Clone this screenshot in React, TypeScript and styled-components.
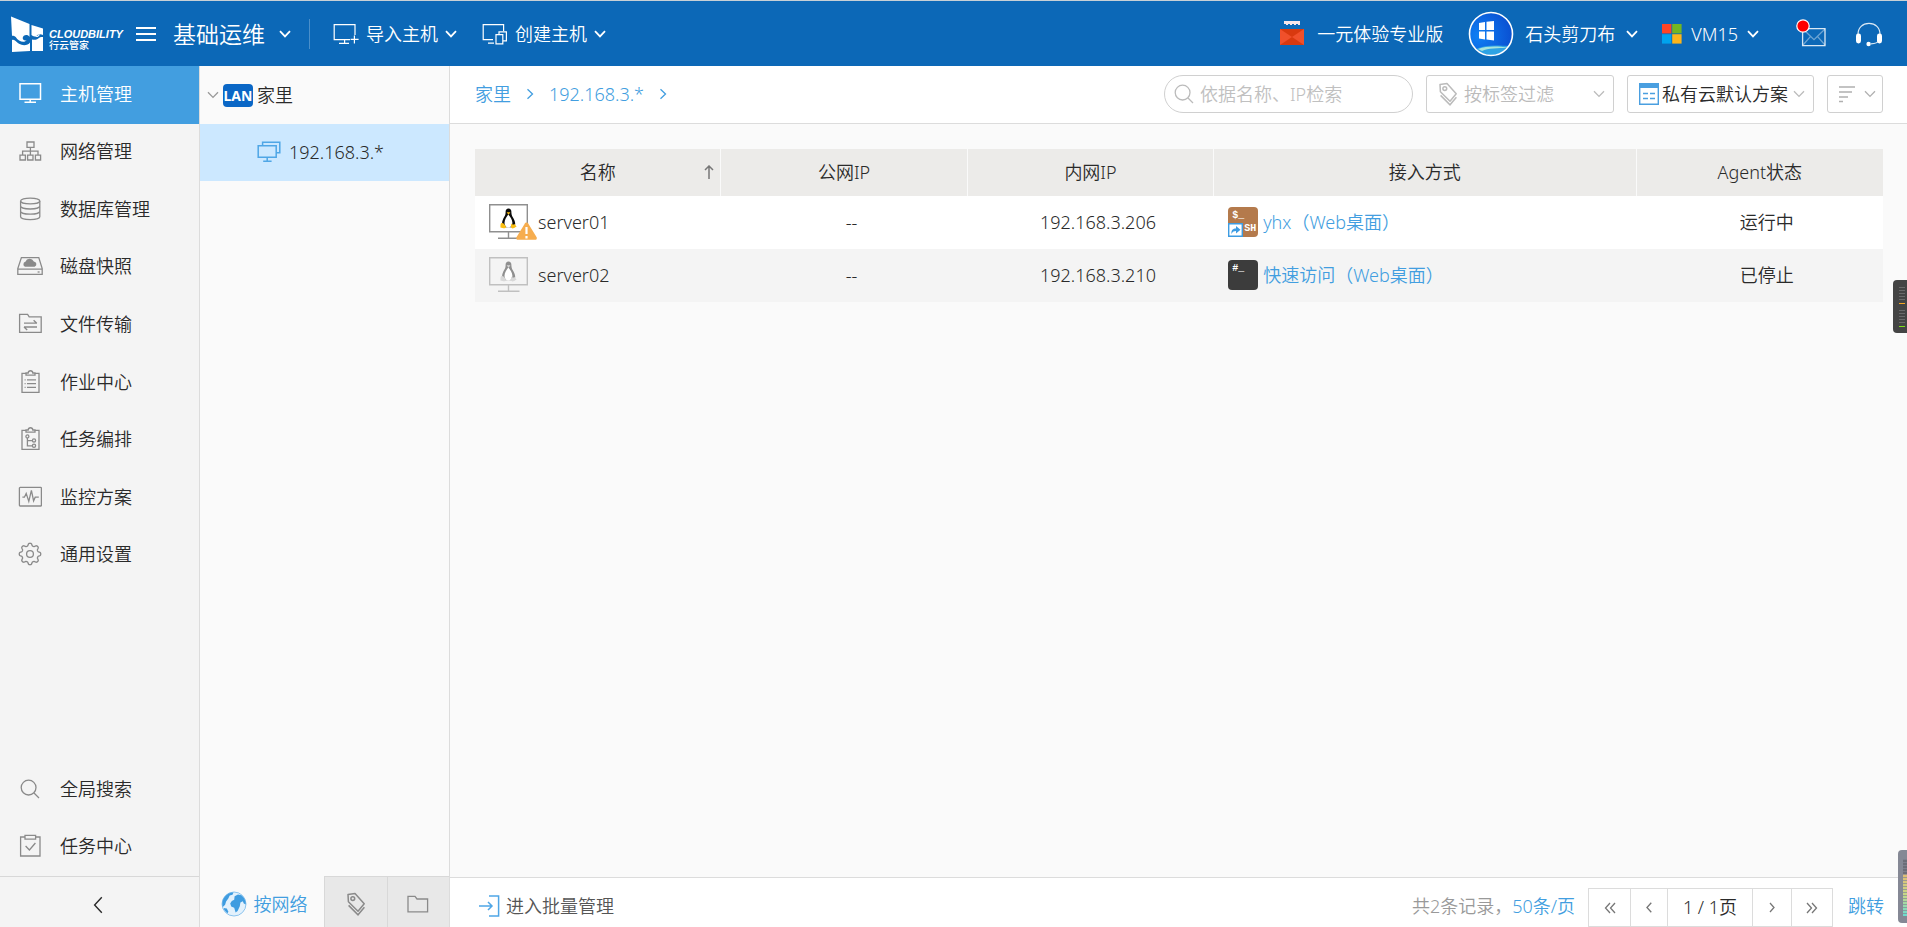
import React from "react";
import styled, { createGlobalStyle } from "styled-components";

const Global = createGlobalStyle`
  * { box-sizing: border-box; }
  body {
    margin: 0;
    font-family: "Noto Sans", "Noto Sans CJK SC", sans-serif;
    font-size: 18px;
    font-weight: 350;
    line-height: 24px;
    color: #2a2a2a;
    background: #fafafa;
  }
  button, input, select {
    font: inherit;
    color: inherit;
    margin: 0;
    padding: 0;
    border: 0;
    background: none;
  }
  a { color: #429ee0; text-decoration: none; }
  svg { display: block; flex: none; }
`;

/* ---------- icons ---------- */

type IconProps = { w?: number; h?: number; box?: string; sw?: number; children: React.ReactNode };

const Icon = ({ w = 24, h = 24, box, sw = 1.3, children }: IconProps) => (
  <svg width={w} height={h} viewBox={box ?? `0 0 ${w} ${h}`} fill="none" stroke="currentColor" strokeWidth={sw} aria-hidden="true">
    {children}
  </svg>
);

const ChevronDown = ({ sw = 1.8 }: { sw?: number }) => (
  <Icon w={12} h={8} sw={sw}><path d="M1 1.2 6 6.4 11 1.2" /></Icon>
);

const ChevronLeft = ({ w = 10, h = 18, sw = 1.4 }) => (
  <Icon w={w} h={h} box="0 0 10 18" sw={sw}><path d="M8.8 1.2 1.6 9l7.2 7.8" /></Icon>
);

const MonitorIcon = () => (
  <Icon sw={1.5}><path d="M2 1.8h20.5v15.4H2zM12.2 17v3.2M6.5 20.3h11.5" /></Icon>
);

const NetworkIcon = () => (
  <Icon><path d="M9 3h7v5.4H9zM2 16.2h5.4v4.8H2zM9.6 16.2H15v4.8H9.6zM17.4 16.2h5.2v4.8h-5.2zM12.4 8.4v7.8M4.6 16.2v-4h15.4v4" /></Icon>
);

const DatabaseIcon = () => (
  <Icon><ellipse cx="12.2" cy="4" rx="9.6" ry="2.9" /><path d="M2.6 4v15.8c0 1.5 4.3 2.8 9.6 2.8s9.6-1.3 9.6-2.8V4M2.6 9c0 1.7 4.3 3 9.6 3s9.6-1.3 9.6-3M2.6 14.2c0 1.7 4.3 3 9.6 3s9.6-1.3 9.6-3" /></Icon>
);

const DiskIcon = () => (
  <Icon w={26}>
    <path d="M4.4 3.6h17.4l3.4 11v5.8H.8v-5.8zM1 15.2h24" />
    <path d="M8.2 12.8a2.6 2.6 0 0 1 .2-5 4.6 4.6 0 0 1 8.4-.4 2.8 2.8 0 0 1 .8 5.4z" fill="currentColor" stroke="none" />
    <path d="M20.6 18h2" />
  </Icon>
);

const TransferIcon = () => (
  <Icon><path d="M1.6 2.4h8l1.6 2.4h12v15.6H1.6zM6 11.2h13M15.6 8.2l3.2 3M19 15H6M9.2 18 6 15" /></Icon>
);

const JobIcon = () => (
  <Icon><path d="M8 3.4H4v19h17v-19h-4M8 5.2V3h2.2c.2-3 4.400-3 4.600 0H17v2.200zM9 9.800h9M9 13.600h9M9 17.400h9M6.600 9.800h1M6.600 13.600h1M6.600 17.400h1" /></Icon>
);

const FlowIcon = () => (
  <Icon>
    <path d="M8 3.4H4v19h17v-19h-4M8 5.2V3h2.2c.2-3 4.400-3 4.600 0H17v2.200zM9.400 11v7.800h5M9.400 13.600h5" />
    <circle cx="9.4" cy="9.4" r="1.5" /><circle cx="16" cy="13.4" r="1.6" /><circle cx="16" cy="18.8" r="1.6" />
  </Icon>
);

const MonitorPlanIcon = () => (
  <Icon><rect x="1.4" y="2.4" width="22" height="18.6" rx=".8" /><path d="M4.4 12.200h2l1.800-3.800 2.600 8 2.600-11 2.200 10.400 1.600-3.600h3.600" /></Icon>
);

const gearOutline = Array.from({ length: 160 }, (_, i) => {
  const angle = (i / 160) * Math.PI * 2;
  const radius = 9.5 + 1.3 * Math.tanh(1.8 * Math.cos(8 * angle));
  return `${(12 + radius * Math.cos(angle)).toFixed(2)},${(12 + radius * Math.sin(angle)).toFixed(2)}`;
}).join(" ");

const GearIcon = () => (
  <Icon><circle cx="12" cy="12" r="3.4" /><polygon points={gearOutline} strokeLinejoin="round" /></Icon>
);

const SearchIcon = ({ sw = 1.3 }) => (
  <Icon w={20} h={20} sw={sw}><circle cx="8.6" cy="8.6" r="7.4" /><path d="m14 14 5 5" /></Icon>
);

const TaskIcon = () => (
  <Icon><path d="M7 3H2.6v19H22V3h-4.4M7 1.4h10.6v3.8H7zM7.6 12l3.800 4 6-7" /></Icon>
);

const TagIcon = () => (
  <Icon w={20} h={24} sw={1.5}>
    <path d="M2 2.4 9 1.6 18.2 11.8 12 19.2 2.4 9.8z" strokeLinejoin="round" />
    <path d="M2.6 13.4 12 22.8 18.4 15.2" />
    <circle cx="6.8" cy="6.6" r="1.9" />
  </Icon>
);

const FolderIcon = () => (
  <Icon w={22} h={18}><path d="M1 1.4h7l2 2.6h10.6v12.8H1z" /></Icon>
);

const EnterIcon = () => (
  <Icon w={22} h={22} sw={1.5}><path d="M11 1h9.600v20H11M1 11h13M10 7l4 4-4 4" /></Icon>
);

const GlobeIcon = () => (
  <svg width="26" height="28" viewBox="0 0 26 26" aria-hidden="true">
    <circle cx="13" cy="13" r="12" fill="#e3f1fc" stroke="#8cc4ee" />
    <path d="M4 5.5C6.5 2 11 1 12.5 1.6l-1 2.200-2.800.8-1.400 3-2.200 2.800-1 3.400L1.800 16C.6 12 1.800 8 4 5.5zM2.600 17l3.200.6 1.600 3.200-1 1.400c-2-1.400-3.300-3.200-3.800-5.200z" fill="#3f9ce0" />
    <path d="m13.6 5.2 3.4-1.6 3.4.6c3 2.600 4.600 5.800 4.400 9.200l-2-.8-1-2.400-2.400 1.400-.6 3.600-2.200 4.800-2 1.400-1.400-4.600-3-1.200-1-3 1.600-2.600 2.400-1.200z" fill="#3f9ce0" />
  </svg>
);

const ScreensIcon = () => (
  <Icon w={24} h={22} sw={1.5}><path d="M5.6 4.6V1.2h17.2v10.6h-3M1.2 4.8h18v11.4h-18zM10.2 16.2v3.4M6.2 20.2h8.400" /></Icon>
);

const ImportIcon = () => (
  <Icon w={26} h={22} sw={1.2}><path d="M22 12V1.6H1.2v15H17M11.6 16.6v3.8M6 20.4h10M21.4 12.4v8M17.6 16.4h8" /></Icon>
);

const CreateIcon = () => (
  <Icon w={26} h={22} sw={1.2}><path d="M21.6 8V1.6H1.2v15H11M6 20.2h6M14 11.6h6.8v9.2H14zM17 11.6V8.8h7.4v9h-3.6" /></Icon>
);

const RedPacketIcon = () => (
  <svg width="24" height="26" viewBox="0 0 24 26" aria-hidden="true">
    <path d="M4 0h16v4H4z" fill="#f7e6ea" />
    <path d="M4 3h2v2H4zM8 3h2v2H8zM12 3h2v2h-2zM16 3h2v2h-2z" fill="#0c68b7" />
    <path d="M0 8h24v16H0z" fill="#f0502b" />
    <path d="M0 8h24L12 16zM0 24l12-8 12 8z" fill="#d8390f" />
  </svg>
);

const AvatarIcon = () => (
  <svg width="46" height="46" viewBox="0 0 46 46" role="img" aria-label="石头剪刀布">
    <defs>
      <radialGradient id="sky" cx="20%" cy="55%" r="80%">
        <stop offset="0" stopColor="#0f80f4" /><stop offset="1" stopColor="#0a50d2" />
      </radialGradient>
      <clipPath id="disc"><circle cx="23" cy="23" r="21" /></clipPath>
    </defs>
    <circle cx="23" cy="23" r="21" fill="url(#sky)" />
    <g clipPath="url(#disc)">
      <path d="M8 38c8-4 18-4 34-3l-6 9H14z" fill="#2ea3e4" />
      <path d="M10 38c9-3 20-3 30-1-10 0-20 0-26 3z" fill="#a6e4dc" />
    </g>
    <path d="m11 12 6-1v8h-6zM18.5 10.8 26 10v9h-7.5zM11 20.500h6v8l-6-1zM18.500 20.500H26v9l-7.500-1z" fill="#fff" />
    <circle cx="23" cy="23" r="21.5" fill="none" stroke="#fff" strokeWidth="1.6" />
  </svg>
);

const MicrosoftIcon = () => (
  <svg width="20" height="20" viewBox="0 0 20 20" aria-hidden="true">
    <path d="M0 0h9.400v9.400H0z" fill="#ff4425" /><path d="M10.200 0h9.400v9.400h-9.400z" fill="#72b622" />
    <path d="M0 10.200h9.400v9.400H0z" fill="#00a3ee" /><path d="M10.200 10.200h9.400v9.400h-9.400z" fill="#fcb51a" />
  </svg>
);

const MailIcon = () => (
  <Icon w={32} h={30} sw={1.3}>
    <g strokeOpacity=".85"><path d="M7.6 9.6h22.4v17H7.6z" /><path d="m8 10 11 10.6L30 10M8 26l7.6-8.6M30 26l-7.6-8.6" strokeOpacity=".4" /></g>
    <circle cx="8" cy="7" r="6.2" fill="#f00" stroke="#fff" strokeWidth="1.2" />
  </Icon>
);

const HeadsetIcon = () => (
  <Icon w={28} h={26} sw={1.2}>
    <path d="M3 13.5C3 6.5 7.600 2.400 14 2.400s11 4.100 11 11.100M24.600 19c-1.600 2.600-4 3.800-8.600 3.800" strokeOpacity=".85" />
    <rect x="1" y="12.4" width="5" height="10" rx="2.4" fill="currentColor" stroke="none" />
    <rect x="22" y="12.4" width="5" height="10" rx="2.4" fill="currentColor" stroke="none" />
    <circle cx="13.6" cy="23" r="2.2" fill="currentColor" stroke="none" />
  </Icon>
);

const LogoMark = () => (
  <svg width="33" height="36" viewBox="0 0 33 36" aria-hidden="true">
    <path d="M0 .5 18.5 8v13c-1.500-3-6.500-2.500-6.800 1 0 2.200 2.500 3.200 4 2-2 3.500-8.500 1.500-11-3-1-1-3-1.500-3.700-1.200z" fill="#fff" />
    <path d="M20.5 9 32 12.5V19c-2-1-5-1-6 .5-2 1.500-4 1-5.500-.5z" fill="#fff" />
    <path d="M1 24c3-1 4 2 7 3.800 4 2.200 9 1.600 11-1.300V35L1 36zM21 23.500c3 1 6-.5 7-1.500 1.500-1.500 3-1 4-1v14H21z" fill="#fff" />
    <path d="M24 19c1 2.400 4.400 1.400 4-.8" fill="none" stroke="#fff" strokeWidth="1.2" />
  </svg>
);

const SchemeIcon = () => (
  <svg width="20" height="22" viewBox="0 0 20 22" aria-hidden="true">
    <path d="M.7.700h18.600v20.600H.7z" fill="#fff" stroke="#4a9fe0" strokeWidth="1.4" />
    <path d="M0 0h20v5H0z" fill="#4a9fe0" />
    <path d="M4 10.500h5M11 10.500h5M4 15.500h5M11 15.500h5" stroke="#4a9fe0" strokeWidth="1.3" />
  </svg>
);

const SortIcon = () => (
  <Icon w={17} h={18} sw={1.5}><path d="M0 2h16M0 7h13M0 12h9M0 16.500h4" /></Icon>
);

const HostIcon = ({ off, warn }: { off?: boolean; warn?: boolean }) => {
  const frame = off ? "#c0c0c0" : "#8f8f8f";
  const dark = off ? "#8f8f8f" : "#0b0b0b";
  const foot = off ? "#d8d8d8" : "#fcbf12";
  return (
    <svg width="48" height="38" viewBox="0 0 48 38" aria-hidden="true">
      <path d="M.7 1.7h37.600v27H.7zM19.500 29v6M9 35.300h21.500" fill="none" stroke={frame} strokeWidth="1.4" />
      <path d="M19.500 5.600c-2 0-3 1.600-2.900 3.600.1 3-1 4-2.400 6.600-1.400 2.800-1.600 6-.4 8.400h11.600c1.400-2.600.8-5.600-.6-8.200-1.400-2.400-2.500-3.800-2.400-6.800.1-2-.9-3.600-2.900-3.600z" fill={dark} />
      <path d="M19.300 11.400c-1.600 2.400-4 5.400-3.800 8.800.2 2.800 1.800 4.400 3.800 4.400 2.200 0 4-1.800 4.100-4.600.1-3.400-2.300-6.200-4.100-8.600z" fill="#fff" />
      <path d="M17.600 9.200h3.800l-1.800 2.600z" fill={foot} />
      <path d="M12 20.200c2-1 3.600 1 4.900 3.200.4 1.600-1 2-2.500 1.800l-3-.8c.2-1.600-.2-3 .6-4.200zM22.200 20.600c1 1.400 2.600 1 3.300.4l2.100 2.400-2.600 1.600c-1.400 1-3 .2-3-1.400z" fill={foot} />
      {warn && (
        <>
          <path d="M37.500 19.500c1 0 1.600.6 2 1.400l8 13.200c.8 1.400 0 2.700-1.400 2.700H29c-1.400 0-2.200-1.300-1.400-2.700l8-13.200c.3-.8.9-1.400 1.900-1.400z" fill="#f6ad4f" />
          <path d="M37.500 24v7M37.500 33v2.600" stroke="#fff" strokeWidth="2.2" />
        </>
      )}
    </svg>
  );
};

const ShareArrow = () => (
  <svg width="15" height="14" viewBox="0 0 15 14" aria-hidden="true">
    <path d="M.7.700h13.600v12.600H.7z" fill="#fff" stroke="#3d9ce2" strokeWidth="1.4" />
    <path d="M3.5 11c-.5-4 1.500-5.600 4.500-5.600V3l4.500 3.700L8 10.400V8C6 8 4.500 8.600 3.500 11z" fill="#3d9ce2" />
  </svg>
);

/* ---------- page frame ---------- */

const Page = styled.div`
  display: flex;
  flex-direction: column;
  height: 100vh;
  border-top: 1px solid #c8d0d6;
`;

const Header = styled.header`
  display: flex;
  flex: none;
  align-items: center;
  justify-content: space-between;
  height: 65px;
  padding: 0 24px 0 11px;
  background: #0c68b7;
  color: #fff;
`;

const HeaderGroup = styled.div`
  display: flex;
  align-items: center;
`;

const Logo = styled.a`
  display: flex;
  gap: 5px;
  width: 117px;
  color: #fff;
  white-space: nowrap;
`;

const LogoText = styled.span`
  display: flex;
  flex-direction: column;
  padding-top: 12px;
  font-family: "Liberation Sans", "Noto Sans CJK SC", sans-serif;
  font-weight: 700;
  line-height: 12px;
`;

const LogoName = styled.i`
  font-size: 11px;
`;

const LogoSub = styled.span`
  font-size: 10px;
  font-weight: 500;
`;

const Burger = styled.button`
  display: flex;
  flex-direction: column;
  gap: 4px;
  width: 20px;
  margin-left: 8px;
  &::before, &::after, span { content: ""; height: 2px; width: 20px; background: #fff; }
`;

const HeaderButton = styled.button<{ $gap?: number; $ml: number; $large?: boolean }>`
  display: flex;
  align-items: center;
  gap: ${(p) => p.$gap ?? 7}px;
  margin-left: ${(p) => p.$ml}px;
  font-size: ${(p) => (p.$large ? 23 : 18)}px;
  white-space: nowrap;
  cursor: pointer;
`;

const Divider = styled.span`
  width: 1px;
  height: 30px;
  margin-left: 18px;
  background: #4a8fca;
`;

const Body = styled.div`
  display: flex;
  flex: 1;
  min-height: 0;
`;

/* ---------- side navigation ---------- */

const Sidebar = styled.nav`
  display: flex;
  flex: none;
  flex-direction: column;
  justify-content: space-between;
  width: 200px;
  border-right: 1px solid #dcdcdc;
  background: #f4f4f4;
`;

const NavList = styled.div<{ $height: number }>`
  display: grid;
  grid-auto-rows: 1fr;
  height: ${(p) => p.$height}px;
`;

const NavItem = styled.a<{ $active?: boolean }>`
  display: flex;
  align-items: center;
  gap: 17px;
  padding: 0 0 2px 17px;
  color: ${(p) => (p.$active ? "#fff" : "#2a2a2a")};
  background: ${(p) => (p.$active ? "#429ee0" : "transparent")};
`;

const NavIcon = styled.span<{ $active?: boolean }>`
  display: flex;
  justify-content: center;
  width: 26px;
  color: ${(p) => (p.$active ? "#fff" : "#8a8a8a")};
`;

const Collapse = styled.button`
  display: flex;
  align-items: center;
  justify-content: center;
  width: 100%;
  height: 51px;
  padding: 6px 3px 0 0;
  border-top: 1px solid #d8d8d8;
`;

/* ---------- network tree ---------- */

const Tree = styled.aside`
  display: flex;
  flex: none;
  flex-direction: column;
  width: 250px;
  border-right: 1px solid #dcdcdc;
`;

const TreeRoot = styled.button`
  display: flex;
  align-items: center;
  gap: 4px;
  height: 58px;
  padding: 0 0 0 7px;
  svg { color: #999; }
`;

const LanBadge = styled.span`
  width: 30px;
  height: 23px;
  border-radius: 4px;
  background: #0a67c6;
  color: #fff;
  font-size: 14px;
  font-weight: 700;
  line-height: 23px;
  text-align: center;
`;

const TreeNode = styled.a`
  display: flex;
  align-items: center;
  gap: 8px;
  height: 57px;
  padding: 0 0 2px 57px;
  background: #cce8ff;
  color: #2a2a2a;
  svg { color: #4fa6e6; }
`;

const TreeTabs = styled.div`
  display: grid;
  grid-template-columns: 124px 1fr 1fr;
  height: 51px;
  margin-top: auto;
`;

const TreeTab = styled.button<{ $active?: boolean }>`
  display: flex;
  align-items: center;
  justify-content: center;
  gap: 7px;
  padding: 4px 0 0 ${(p) => (p.$active ? 4 : 0)}px;
  color: ${(p) => (p.$active ? "#429ee0" : "#8a8a8a")};
  background: ${(p) => (p.$active ? "transparent" : "#e8e8e8")};
  border: solid #d8d8d8;
  border-width: ${(p) => (p.$active ? "0" : "1px 0 0 1px")};
`;

/* ---------- main panel ---------- */

const Main = styled.main`
  display: flex;
  flex: 1;
  flex-direction: column;
  min-width: 0;
`;

const Toolbar = styled.div`
  display: flex;
  align-items: center;
  justify-content: space-between;
  height: 58px;
  padding: 0 24px 1px 25px;
  border-bottom: 1px solid #dcdcdc;
  background: #fff;
`;

const Crumbs = styled.nav`
  display: flex;
  align-items: center;
  gap: 15px;
  svg { color: #429ee0; }
`;

const CrumbArrow = () => (
  <Icon w={8} h={12} sw={1.3}><path d="m1.5 1.2 5 4.8-5 4.800" /></Icon>
);

const Filters = styled.div`
  display: flex;
  gap: 13px;
`;

const Field = styled.label<{ $width: number; $round?: boolean; $muted?: boolean }>`
  display: flex;
  align-items: center;
  gap: ${(p) => (p.$muted ? 6 : 3)}px;
  width: ${(p) => p.$width}px;
  height: 38px;
  padding: 0 8px 0 ${(p) => (p.$round ? 9 : 11)}px;
  border: 1px solid #d0d0d0;
  border-radius: ${(p) => (p.$round ? 19 : 3)}px;
  background: #fff;
  color: ${(p) => (p.$muted ? "#bbb" : "#2a2a2a")};
  & > svg:last-child { color: #bbb; margin-left: auto; }
`;

const FieldInput = styled.input`
  flex: 1;
  min-width: 0;
  outline: none;
  &::placeholder { color: #c0c0c0; opacity: 1; }
`;

const FieldSelect = styled.select`
  flex: 1;
  min-width: 0;
  appearance: none;
  outline: none;
`;

const SortButton = styled.button`
  display: flex;
  align-items: center;
  justify-content: space-between;
  width: 56px;
  height: 38px;
  padding: 0 6px 0 11px;
  border: 1px solid #d0d0d0;
  border-radius: 3px;
  color: #b0b0b0;
`;

const Content = styled.section`
  flex: 1;
  padding: 25px 24px 0 25px;
`;

const HostTable = styled.table`
  width: 100%;
  table-layout: fixed;
  border-collapse: separate;
  border-spacing: 0;
`;

const HeadCell = styled.th<{ $wide?: boolean }>`
  width: ${(p) => (p.$wide ? 30 : 17.5)}%;
  height: 47px;
  padding: 0 0 2px;
  background: #ecebe9;
  border-right: 1px solid #fafafa;
  font-weight: inherit;
  &:last-child { border-right: 0; }
`;

const SortHead = styled.div`
  display: grid;
  grid-template-columns: 30px 1fr 30px;
  align-items: center;
  svg { color: #777; margin-left: 14px; }
`;

const Row = styled.tr`
  background: #fff;
  &:nth-child(even) { background: #f4f4f4; }
`;

const Cell = styled.td<{ $left?: boolean }>`
  height: 53px;
  padding: 0 0 2px 14px;
  text-align: ${(p) => (p.$left ? "left" : "center")};
`;

const Inline = styled.div<{ $gap: number }>`
  display: flex;
  align-items: center;
  gap: ${(p) => p.$gap}px;
`;

const Terminal = styled.span<{ $color: string }>`
  position: relative;
  width: 30px;
  height: 30px;
  padding: 3px 4px;
  border-radius: 4px;
  background: ${(p) => p.$color};
  color: #fff;
  font: 700 10px/12px "Liberation Mono", monospace;
`;

const Shortcut = styled.span`
  position: absolute;
  left: 0;
  bottom: 0;
`;

const Protocol = styled.span`
  position: absolute;
  right: 2px;
  bottom: 2px;
`;

const Footer = styled.footer`
  display: flex;
  align-items: center;
  justify-content: space-between;
  height: 50px;
  padding: 6px 23px 0 28px;
  border-top: 1px solid #dcdcdc;
  background: #fff;
`;

const BatchButton = styled.button`
  display: flex;
  align-items: center;
  gap: 6px;
  color: #555;
  svg { color: #4fa6e6; }
`;

const Pagination = styled.div`
  display: flex;
  align-items: center;
  color: #999;
`;

const Pager = styled.div`
  display: flex;
  margin: 4px 15px 0 13px;
  border: 1px solid #dcdcdc;
`;

const PageButton = styled.button<{ $width: number }>`
  display: flex;
  align-items: center;
  justify-content: center;
  width: ${(p) => p.$width}px;
  height: 37px;
  color: #777;
  & + & { border-left: 1px solid #dcdcdc; }
`;

const PageNumber = styled.span`
  width: 86px;
  border: solid #dcdcdc;
  border-width: 0 1px;
  color: #2a2a2a;
  line-height: 37px;
  text-align: center;
`;

/* ---------- floating level meters ---------- */

const Meter = styled.div<{ $pale?: boolean }>`
  position: fixed;
  right: 0;
  ${(p) => (p.$pale ? "bottom: 4px; width: 9px; height: 73px;" : "top: 280px; width: 14px; height: 53px;")}
  border-radius: 4px 0 0 4px;
  overflow: hidden;
`;

const DarkMeter = () => (
  <Meter>
    <svg width="14" height="53" viewBox="0 0 14 53" aria-hidden="true">
      <path d="M0 0h14v53H0z" fill="#444" />
      <path d="M6 7.5h6M6 10.500h6M6 13.500h6M6 16.500h6M6 19.500h6M6 30.500h6M6 33.500h6M6 36.500h6M6 39.500h6M6 42.500h6" stroke="#6a6a6a" />
      <path d="M6 23.500h6" stroke="#f5a623" /><path d="M6 46.500h6" stroke="#7ee01a" />
    </svg>
  </Meter>
);

const PaleMeter = () => (
  <Meter $pale>
    <svg width="9" height="73" viewBox="0 0 9 73" aria-hidden="true">
      <defs>
        <linearGradient id="level" x1="0" y1="0" x2="0" y2="1">
          <stop offset="0" stopColor="#e0bc74" /><stop offset=".5" stopColor="#c8d888" /><stop offset="1" stopColor="#6cdcd0" />
        </linearGradient>
      </defs>
      <path d="M0 0h9v73H0z" fill="#858895" />
      <path d="M5 9h4v15H5z" fill="#6c6d78" />
      <path d="M5 24h4v42H5z" fill="url(#level)" />
      <path d="M7 9v57" stroke="#858895" strokeWidth="4" strokeDasharray="1 2" strokeOpacity=".7" />
    </svg>
  </Meter>
);

/* ---------- data ---------- */

type NavEntry = { label: string; icon: React.ReactNode; active?: boolean };

const navItems: NavEntry[] = [
  { label: "主机管理", icon: <MonitorIcon />, active: true },
  { label: "网络管理", icon: <NetworkIcon /> },
  { label: "数据库管理", icon: <DatabaseIcon /> },
  { label: "磁盘快照", icon: <DiskIcon /> },
  { label: "文件传输", icon: <TransferIcon /> },
  { label: "作业中心", icon: <JobIcon /> },
  { label: "任务编排", icon: <FlowIcon /> },
  { label: "监控方案", icon: <MonitorPlanIcon /> },
  { label: "通用设置", icon: <GearIcon /> },
];

const navTools: NavEntry[] = [
  { label: "全局搜索", icon: <SearchIcon /> },
  { label: "任务中心", icon: <TaskIcon /> },
];

const hosts = [
  { name: "server01", ip: "192.168.3.206", access: "yhx（Web桌面）", status: "运行中", running: true },
  { name: "server02", ip: "192.168.3.210", access: "快速访问（Web桌面）", status: "已停止", running: false },
];

const NavGroup = ({ items, height }: { items: NavEntry[]; height: number }) => (
  <NavList $height={height}>
    {items.map((it) => (
      <NavItem key={it.label} href="#" $active={it.active}>
        <NavIcon $active={it.active}>{it.icon}</NavIcon>
        {it.label}
      </NavItem>
    ))}
  </NavList>
);

export default function App() {
  return (
    <>
      <Global />
      <Page>
        <Header>
          <HeaderGroup>
            <Logo href="#">
              <LogoMark />
              <LogoText>
                <LogoName>CLOUDBILITY</LogoName>
                <LogoSub>行云管家</LogoSub>
              </LogoText>
            </Logo>
            <Burger aria-label="菜单"><span /></Burger>
            <HeaderButton $ml={17} $gap={14} $large>基础运维<ChevronDown /></HeaderButton>
            <Divider />
            <HeaderButton $ml={23}><ImportIcon />导入主机<ChevronDown /></HeaderButton>
            <HeaderButton $ml={25}><CreateIcon />创建主机<ChevronDown /></HeaderButton>
          </HeaderGroup>
          <HeaderGroup>
            <HeaderButton $ml={0} $gap={13}><RedPacketIcon />一元体验专业版</HeaderButton>
            <HeaderButton $ml={25} $gap={11}><AvatarIcon />石头剪刀布<ChevronDown /></HeaderButton>
            <HeaderButton $ml={24} $gap={9}><MicrosoftIcon />VM15<ChevronDown /></HeaderButton>
            <HeaderButton $ml={36} aria-label="消息"><MailIcon /></HeaderButton>
            <HeaderButton $ml={28} aria-label="客服"><HeadsetIcon /></HeaderButton>
          </HeaderGroup>
        </Header>
        <Body>
          <Sidebar>
            <NavGroup items={navItems} height={518} />
            <div>
              <NavGroup items={navTools} height={115} />
              <Collapse aria-label="收起"><ChevronLeft /></Collapse>
            </div>
          </Sidebar>
          <Tree>
            <TreeRoot><ChevronDown sw={1.3} /><LanBadge>LAN</LanBadge>家里</TreeRoot>
            <TreeNode href="#"><ScreensIcon />192.168.3.*</TreeNode>
            <TreeTabs>
              <TreeTab $active><GlobeIcon />按网络</TreeTab>
              <TreeTab aria-label="按标签"><TagIcon /></TreeTab>
              <TreeTab aria-label="按分组"><FolderIcon /></TreeTab>
            </TreeTabs>
          </Tree>
          <Main>
            <Toolbar>
              <Crumbs>
                <a href="#">家里</a><CrumbArrow />
                <a href="#">192.168.3.*</a><CrumbArrow />
              </Crumbs>
              <Filters>
                <Field $width={249} $round $muted>
                  <SearchIcon />
                  <FieldInput placeholder="依据名称、IP检索" aria-label="依据名称、IP检索" />
                </Field>
                <Field $width={188} $muted>
                  <TagIcon />
                  <FieldSelect aria-label="按标签过滤"><option>按标签过滤</option></FieldSelect>
                  <ChevronDown sw={1.3} />
                </Field>
                <Field $width={187}>
                  <SchemeIcon />
                  <FieldSelect aria-label="显示方案"><option>私有云默认方案</option></FieldSelect>
                  <ChevronDown sw={1.3} />
                </Field>
                <SortButton aria-label="排序"><SortIcon /><ChevronDown sw={1.3} /></SortButton>
              </Filters>
            </Toolbar>
            <Content>
              <HostTable>
                <thead>
                  <tr>
                    <HeadCell>
                      <SortHead>
                        <span />名称
                        <Icon w={10} h={14} sw={1.5}><path d="M5 14V1M1 5l4-4 4 4" /></Icon>
                      </SortHead>
                    </HeadCell>
                    <HeadCell>公网IP</HeadCell>
                    <HeadCell>内网IP</HeadCell>
                    <HeadCell $wide>接入方式</HeadCell>
                    <HeadCell>Agent状态</HeadCell>
                  </tr>
                </thead>
                <tbody>
                  {hosts.map((h) => (
                    <Row key={h.name}>
                      <Cell $left><Inline $gap={1}><HostIcon off={!h.running} warn={h.running} />{h.name}</Inline></Cell>
                      <Cell>--</Cell>
                      <Cell>{h.ip}</Cell>
                      <Cell $left>
                        <Inline $gap={5}>
                          {h.running ? (
                            <Terminal $color="#b47a4c">$_<Protocol>SH</Protocol><Shortcut><ShareArrow /></Shortcut></Terminal>
                          ) : (
                            <Terminal $color="#3c3c3c">#_</Terminal>
                          )}
                          <a href="#">{h.access}</a>
                        </Inline>
                      </Cell>
                      <Cell>{h.status}</Cell>
                    </Row>
                  ))}
                </tbody>
              </HostTable>
            </Content>
            <Footer>
              <BatchButton><EnterIcon />进入批量管理</BatchButton>
              <Pagination>
                共2条记录，<a href="#">50条/页</a>
                <Pager>
                  <PageButton $width={41} aria-label="首页"><Icon w={12} h={12} sw={1.3}><path d="M6 1 1.500 6 6 11M11 1 6.500 6l4.500 5" /></Icon></PageButton>
                  <PageButton $width={37} aria-label="上一页"><ChevronLeft w={6} h={11} sw={2.2} /></PageButton>
                  <PageNumber>1 / 1页</PageNumber>
                  <PageButton $width={38} aria-label="下一页"><Icon w={6} h={11} sw={1.3}><path d="m1 1 4 4.500L1 10" /></Icon></PageButton>
                  <PageButton $width={41} aria-label="末页"><Icon w={12} h={12} sw={1.3}><path d="m1 1 4.500 5L1 11M6 1l4.500 5L6 11" /></Icon></PageButton>
                </Pager>
                <a href="#">跳转</a>
              </Pagination>
            </Footer>
          </Main>
        </Body>
      </Page>
      <DarkMeter />
      <PaleMeter />
    </>
  );
}
